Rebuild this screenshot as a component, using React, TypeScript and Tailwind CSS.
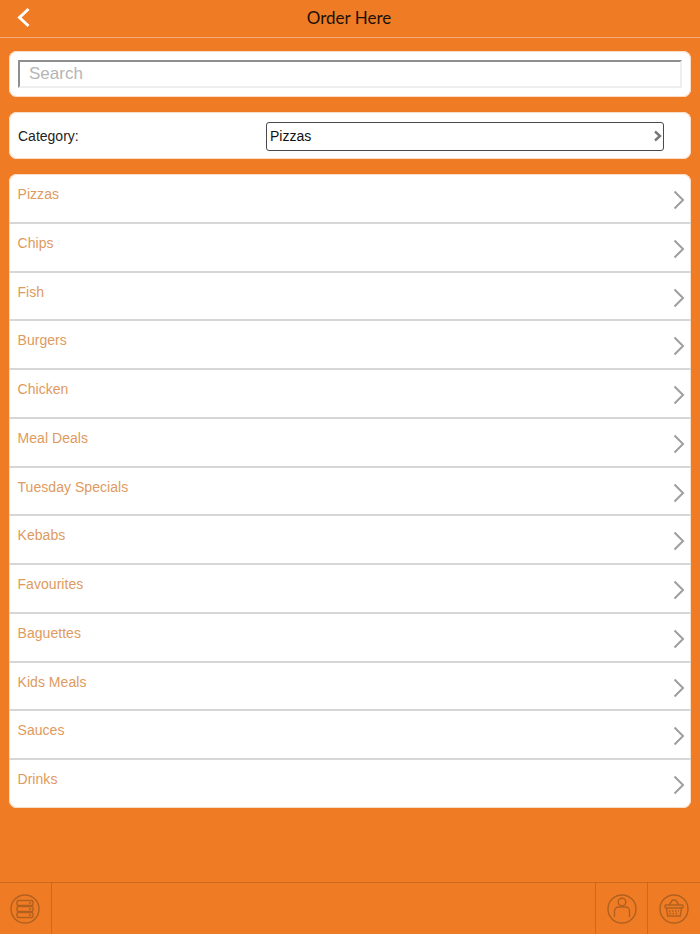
const categories = [
  "Pizzas",
  "Chips",
  "Fish",
  "Burgers",
  "Chicken",
  "Meal Deals",
  "Tuesday Specials",
  "Kebabs",
  "Favourites",
  "Baguettes",
  "Kids Meals",
  "Sauces",
  "Drinks",
];

function Chevron() {
  return (
    <svg className="mt-[15px]" width="14" height="20" viewBox="0 0 14 20" fill="none" stroke="#9e9e9e" strokeWidth="2">
      <path d="M2.500 1.500L11 10l-8.500 8.500" />
    </svg>
  );
}

function ServerIcon() {
  return (
    <svg width="30" height="30" viewBox="0 0 30 30" fill="none" stroke="#b0611f" strokeWidth="1.4">
      <circle cx="15" cy="15" r="14" />
      <rect x="7" y="6.500" width="16" height="5" rx="1.500" />
      <rect x="7" y="12.500" width="16" height="5" rx="1.500" />
      <rect x="7" y="18.500" width="16" height="5" rx="1.500" />
      <circle cx="20" cy="9" r="0.400" />
      <circle cx="20" cy="15" r="0.400" />
      <circle cx="20" cy="21" r="0.400" />
    </svg>
  );
}

function UserIcon() {
  return (
    <svg width="30" height="30" viewBox="0 0 30 30" fill="none" stroke="#b0611f" strokeWidth="1.4">
      <circle cx="15" cy="15" r="14" />
      <circle cx="15" cy="8" r="3.800" />
      <path d="M7.500 23v-6c0-2.200 1.800-4 4-4h7c2.200 0 4 1.800 4 4v6" />
    </svg>
  );
}

function BasketIcon() {
  return (
    <svg width="30" height="30" viewBox="0 0 30 30" fill="none" stroke="#b0611f" strokeWidth="1.4">
      <circle cx="15" cy="15" r="14" />
      <rect x="6" y="11" width="18" height="3" rx="1" />
      <path d="M7.500 14l1.200 8h12.600l1.200-8" />
      <path d="M10 11l3.500-5h3L20 11" />
      <path d="M10 17h10M10.500 19.500h9" strokeDasharray="1.500 1.500" />
    </svg>
  );
}

export default function App() {
  return (
    <div className="flex h-[934px] w-[700px] flex-col bg-[#f07b25] font-['Liberation_Sans',Arial,sans-serif]">
      <header className="relative flex h-[38px] items-center justify-center border-b border-[#f3ab7b] pb-[2px] pr-[2px]">
        <svg className="absolute left-[16px] top-[7px]" width="16" height="22" viewBox="0 0 16 22" fill="none" stroke="#ffffff" strokeWidth="3">
          <path d="M12.500 2L3.500 10.500l9 8.500" />
        </svg>
        <h1 className="font-['Lato',sans-serif] text-[17px] text-[#1c1008]">Order Here</h1>
      </header>

      <div className="flex flex-1 flex-col gap-[15px] px-[9px] pt-[13px]">
        <div className="h-[46px] rounded-lg bg-white p-[9px] ring-1 ring-inset ring-[#fbdcc4]">
          <div className="flex h-[28px] items-center border-2 border-b-[#eeeeee] border-l-[#8f8f8f] border-r-[#eeeeee] border-t-[#8f8f8f] pl-[9px] text-[17px] text-[#b5b5b5]">
            Search
          </div>
        </div>

        <div className="flex h-[47px] items-center rounded-lg bg-white pl-[9px] ring-1 ring-inset ring-[#fbdcc4]">
          <span className="w-[248px] text-sm text-[#222222]">Category:</span>
          <div className="mt-[1px] flex h-[29px] w-[398px] items-center justify-between rounded-[3px] border border-[#4a4a4a] pl-[3px] text-sm text-[#111111]">
            Pizzas
            <svg width="10" height="12" viewBox="0 0 10 12" fill="none" stroke="#777777" strokeWidth="2.400">
              <path d="M2 1.500L7 6l-5 4.500" />
            </svg>
          </div>
        </div>

        <ul className="h-[634px] overflow-hidden rounded-lg bg-white pt-[1px] ring-1 ring-inset ring-[#fbdcc4]">
          {categories.map((name) => (
            <li
              key={name}
              className="flex h-[48.75px] justify-between border-b-2 border-[#d6d6d6] pl-[8.500px] pr-[5px] last:border-b-0"
            >
              <span className="pt-[10px] text-[14px] leading-[18px] tracking-[0.05px] text-[#de9a60]">{name}</span>
              <Chevron />
            </li>
          ))}
        </ul>
      </div>

      <footer className="flex h-[52px] border-t border-[#c96a1f]">
        <div className="flex w-[52px] items-center justify-center border-r border-[#c96a1f] pr-[1px]">
          <ServerIcon />
        </div>
        <div className="flex-1" />
        <div className="flex w-[52px] items-center justify-center border-l border-[#c96a1f]">
          <UserIcon />
        </div>
        <div className="flex w-[53px] items-center justify-center border-l border-[#c96a1f]">
          <BasketIcon />
        </div>
      </footer>
    </div>
  );
}
